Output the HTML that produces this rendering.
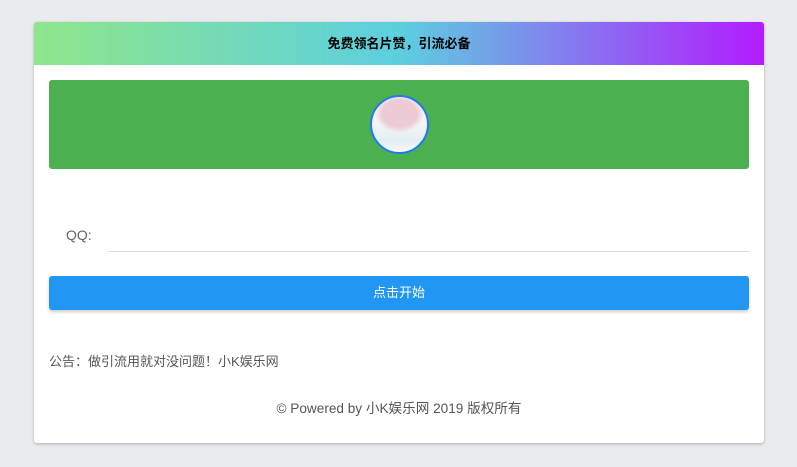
<!DOCTYPE html>
<html><head><meta charset="utf-8"><style>
body{margin:0;background:#eaebef;width:797px;height:467px;font-family:"Liberation Sans","Noto Sans CJK SC",sans-serif;position:relative;overflow:hidden}
.card{position:absolute;left:34px;top:22px;width:730px;height:421px;background:#fff;border-radius:3px;box-shadow:0 1px 3px rgba(0,0,0,.25);overflow:hidden}
.hd{height:43px;background:linear-gradient(90deg,#8ee68a 0%,#5ccfe0 50%,#b31bff 100%);text-align:center;line-height:43px;font-size:13px;font-weight:bold;color:#000}
.green{position:absolute;left:15px;top:58px;width:700px;height:89px;background:#4caf50;border-radius:3px}
.av{position:absolute;left:321px;top:15px;width:55px;height:55px;border:2px solid #1e7bf0;border-radius:50%;background:radial-gradient(ellipse 45% 35% at 50% 30%,#eccbd5 0 70%,rgba(255,255,255,0) 100%),linear-gradient(180deg,#fafafa 0%,#f3f4f7 50%,#e3eef4 80%,#f8f8f8 100%)}
.qq{position:absolute;left:32px;top:205px;font-size:14px;color:#666}
.line{position:absolute;left:74px;top:229px;width:641px;height:1px;background:#ddd}
.btn{position:absolute;left:15px;top:254px;width:700px;height:34px;background:#2196f3;border-radius:3px;color:#fff;font-size:13px;text-align:center;line-height:34px;box-shadow:0 2px 3px rgba(0,0,0,.2)}
.note{position:absolute;left:15px;top:329px;font-size:13px;color:#555}
.ft{position:absolute;left:0;width:730px;top:375px;text-align:center;font-size:13.6px;color:#555}
</style></head><body>
<div class="card">
<div class="hd">免费领名片赞，引流必备</div>
<div class="green"><div class="av"></div></div>
<div class="qq">QQ:</div>
<div class="line"></div>
<div class="btn">点击开始</div>
<div class="note">公告：做引流用就对没问题！小K娱乐网</div>
<div class="ft">© Powered by 小K娱乐网 2019 版权所有</div>
</div>
</body></html>
